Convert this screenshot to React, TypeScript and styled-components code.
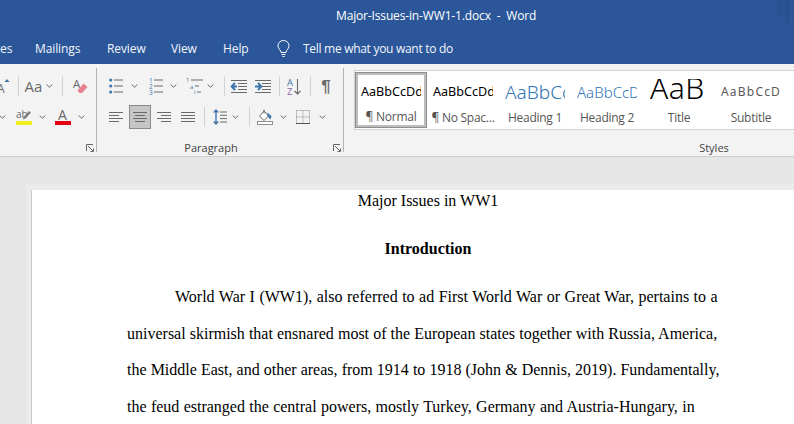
import React from 'react'
import styled, { createGlobalStyle } from 'styled-components'

const uiFont = `'Open Sans', 'Noto Sans', sans-serif`
const blue = '#2b579a'
const iconGrey = '#6a6a6a'
const iconBlue = '#3f76ad'

const GlobalStyle = createGlobalStyle`
  html, body {
    margin: 0;
    padding: 0;
    width: 794px;
    height: 424px;
    overflow: hidden;
    background: #e6e6e6;
  }
`

const Root = styled.div`
  width: 794px;
  height: 424px;
  overflow: hidden;
  display: flex;
  flex-direction: column;
  font-family: ${uiFont};
`

const TitleBar = styled.div`
  height: 32px;
  flex: none;
  position: relative;
  padding-left: 336px;
  background: ${blue};
  color: #fff;
  font-size: 12px;
  line-height: 32px;
  white-space: pre;
  letter-spacing: -0.15px;
`

// the window buttons are only a faint smudge in the screenshot
const FaintControl = styled.div<{ $right: number; $w: number; $h: number }>`
  position: absolute;
  top: 0;
  right: ${p => p.$right}px;
  width: ${p => p.$w}px;
  height: ${p => p.$h}px;
  background: rgba(0, 0, 0, 0.06);
`

const TabBar = styled.div`
  height: 32px;
  flex: none;
  background: ${blue};
  color: #f2f5fa;
  font-size: 12px;
  display: flex;
  align-items: center;
  letter-spacing: -0.1px;
`

const Tab = styled.div<{ $w: number }>`
  width: ${p => p.$w}px;
  flex: none;
  white-space: nowrap;
`

const TellMe = styled(Tab)`
  letter-spacing: -0.29px;
`

const Ribbon = styled.div`
  height: 92px;
  flex: none;
  display: flex;
  background: #f3f3f3;
  border-bottom: 1px solid #cfcfcf;
`

const Group = styled.div<{ $w: number; $pad: number }>`
  width: ${p => p.$w}px;
  flex: none;
  height: 84px;
  margin-top: 4px;
  padding: 2px 0 0 ${p => p.$pad}px;
  box-sizing: border-box;
  border-right: 1px solid #b4b4b4;
  position: relative;
  display: flex;
  flex-direction: column;
`

const ToolRow = styled.div<{ $h: number }>`
  height: ${p => p.$h}px;
  flex: none;
  display: flex;
  align-items: center;
`

const Tool = styled.div<{ $w: number }>`
  width: ${p => p.$w}px;
  flex: none;
  display: flex;
  justify-content: center;
  align-items: center;
`

const PressedTool = styled(Tool)`
  height: 22px;
  background: #c6c6c6;
  border: 1px solid #8b8b8b;
  box-sizing: content-box;
  width: 20px;
`

const CaseGlyph = styled.span`
  font-size: 15px;
  color: ${iconGrey};
  line-height: 1;
`

const PilcrowGlyph = styled.span`
  font-family: 'Liberation Sans', sans-serif;
  font-size: 17px;
  font-weight: 700;
  color: ${iconGrey};
  line-height: 1;
`

const Sep = styled.div<{ $w: number }>`
  width: ${p => p.$w}px;
  height: 20px;
  flex: none;
  position: relative;
  &::after {
    content: '';
    position: absolute;
    left: 50%;
    top: 0;
    bottom: 0;
    width: 1px;
    background: #d2d2d2;
  }
`

const GroupLabel = styled.div<{ $w: number }>`
  position: absolute;
  bottom: -4px;
  left: 0;
  width: ${p => p.$w}px;
  height: 16px;
  line-height: 16px;
  text-align: center;
  font-size: 11px;
  color: #444;
`

const LauncherWrap = styled.div`
  position: absolute;
  right: 2px;
  bottom: 0;
  display: flex;
`

const StylesGroup = styled.div`
  flex: 1;
  min-width: 0;
  height: 84px;
  margin-top: 4px;
  position: relative;
  padding-left: 10px;
`

const Gallery = styled.div`
  height: 60px;
  margin-top: 2px;
  box-sizing: border-box;
  background: #fff;
  border: 1px solid #d4d4d4;
  border-right: none;
  display: flex;
  overflow: hidden;
`

const StyleItem = styled.div<{ $active?: boolean }>`
  width: 72px;
  flex: none;
  box-sizing: border-box;
  margin: 1px 0;
  border: ${p => (p.$active ? '3px solid #bdbdbd' : 'none')};
  outline: ${p => (p.$active ? '1px solid #8e8e8e' : 'none')};
  outline-offset: -1px;
  padding-top: ${p => (p.$active ? 0 : 3)}px;
  display: flex;
  flex-direction: column;
  align-items: center;
  overflow: hidden;
`

const Preview = styled.div<{ $size: number; $color: string; $spacing?: number; $w: number }>`
  height: 35px;
  width: ${p => p.$w}px;
  overflow: hidden;
  font-size: ${p => p.$size}px;
  color: ${p => p.$color};
  letter-spacing: ${p => p.$spacing ?? 0}px;
  line-height: 34px;
  white-space: nowrap;
  font-family: 'Noto Sans', sans-serif;
  font-weight: ${p => (p.$size > 13 ? 300 : 400)};
`

const TitlePreview = styled(Preview)`
  height: 22px;
  margin: 4px 0 9px;
  line-height: 18px;
  letter-spacing: 0.5px;
`

const StyleName = styled.div`
  font-size: 12px;
  line-height: 16px;
  color: #555;
  white-space: nowrap;
  letter-spacing: -0.25px;
`

const Canvas = styled.div`
  flex: 1;
  min-height: 0;
  background: #e6e6e6;
  padding: 33px 0 0 32px;
`

const Page = styled.div`
  width: 792px;
  min-height: 300px;
  background: #fff;
  box-shadow: -1px 0 0 #c9c9c9, 0 0 0 6px #ebebeb;
  box-sizing: border-box;
  padding: 0 95px;
  font-family: 'Liberation Serif', serif;
  font-size: 16px;
  color: #000;
`

const DocTitle = styled.div`
  height: 22px;
  line-height: 22px;
  text-align: center;
  white-space: nowrap;
`

const Heading = styled.div`
  margin-top: 26px;
  height: 22px;
  line-height: 22px;
  text-align: center;
  font-weight: 700;
`

const Body = styled.div`
  margin-top: 19px;
`

const BodyLine = styled.div<{ $indent?: boolean; $stretch?: number }>`
  height: 36.6px;
  line-height: 36.6px;
  white-space: nowrap;
  padding-left: ${p => (p.$indent ? 48 : 0)}px;
  word-spacing: ${p => p.$stretch ?? 0}px;
`

const Icon = styled.svg`
  display: block;
  overflow: visible;
`

const IconText = styled.text<{ $size: number; $color: string }>`
  font-family: 'Open Sans', sans-serif;
  font-size: ${p => p.$size}px;
  fill: ${p => p.$color};
`

function Chevron() {
  return (
    <Icon width='7' height='4' viewBox='0 0 7 4'>
      <path d='M.7.6 3.5 3.2 6.3.6' fill='none' stroke='#666' strokeWidth='1' />
    </Icon>
  )
}

function Launcher() {
  return (
    <Icon width='8' height='8' viewBox='0 0 8 8'>
      <path d='M.5 7V.5H7M2 2l5 5M4.500 7.500h3v-3' fill='none' stroke='#666' strokeWidth='1' />
    </Icon>
  )
}

function Lines({ kind }: { kind: 'left' | 'center' | 'right' | 'justify' }) {
  const short =
    kind === 'left' ? [0, 10] : kind === 'center' ? [2, 12] : kind === 'right' ? [4, 14] : [0, 14]
  const rows = [[0, 14], short, [0, 14], short]
  return (
    <Icon width='14' height='12' viewBox='0 0 14 12'>
      {rows.map((r, i) => (
        <path key={i} d={`M${r[0]} ${1.5 + i * 3}H${r[1]}`} stroke={iconGrey} strokeWidth='1' />
      ))}
    </Icon>
  )
}

function Bullets() {
  return (
    <Icon width='14' height='16' viewBox='0 0 14 16'>
      {[2, 8, 14].map(y => (
        <g key={y}>
          <circle cx='1.7' cy={y} r='1.6' fill={iconBlue} />
          <path d={`M5 ${y}h9`} stroke={iconGrey} strokeWidth='1' />
        </g>
      ))}
    </Icon>
  )
}

function Numbering() {
  return (
    <Icon width='15' height='17' viewBox='0 0 15 17'>
      {['1', '2', '3'].map((n, i) => (
        <g key={n}>
          <IconText x='1' y={4.5 + i * 6} $size={6.5} $color={iconBlue}>{n}</IconText>
          <path d={`M6 ${2 + i * 6}h9`} stroke={iconGrey} strokeWidth='1' />
        </g>
      ))}
    </Icon>
  )
}

function Multilevel() {
  return (
    <Icon width='17' height='16' viewBox='0 0 17 16'>
      <IconText x='0' y='4' $size={6} $color={iconGrey}>1</IconText>
      <IconText x='4' y='10.500' $size={6} $color={iconBlue}>a</IconText>
      <IconText x='8' y='16' $size={6} $color={iconBlue}>i</IconText>
      <path d='M5 2h12M9 8h4M11 14h4' fill='none' stroke={iconGrey} strokeWidth='1' />
    </Icon>
  )
}

function Indent({ out }: { out: boolean }) {
  return (
    <Icon width='16' height='13' viewBox='0 0 16 13'>
      <path d='M0 .5h16M7 3.500h9M7 6.500h9M7 9.500h9M0 12.500h16' stroke={iconGrey} strokeWidth='1' />
      <path
        d={out ? 'M6 6.500H1M4 3 .7 6.500 4 10' : 'M0 6.500h5M3 3l3.300 3.500L3 10'}
        fill='none'
        stroke={iconBlue}
        strokeWidth='2'
      />
    </Icon>
  )
}

function Sort() {
  return (
    <Icon width='14' height='17' viewBox='0 0 14 17'>
      <IconText x='0' y='7.500' $size={9.5} $color={iconBlue}>A</IconText>
      <IconText x='0' y='16.500' $size={9.5} $color='#8a63a8'>Z</IconText>
      <path d='M10.500 1v15M7.500 13l3 3 3-3' fill='none' stroke={iconGrey} strokeWidth='1.100' />
    </Icon>
  )
}

function LineSpacing() {
  return (
    <Icon width='14' height='16' viewBox='0 0 14 16'>
      <path d='M3 1v14M.8 3.500 3 1l2.200 2.500M.8 12.500 3 15l2.200-2.500' fill='none' stroke={iconBlue} strokeWidth='1.400' />
      <path d='M7 3h7M7 6.300h7M7 9.600h7M7 13h7' stroke={iconGrey} strokeWidth='1' />
    </Icon>
  )
}

function Shading() {
  return (
    <Icon width='16' height='16' viewBox='0 0 16 16'>
      <path d='M2.500 7 7 2l4.500 5L7 11.500z' fill='#fff' stroke={iconGrey} strokeWidth='1' />
      <path d='M7 .5v4' stroke={iconGrey} strokeWidth='1' />
      <path d='M10 3.500 14.500 7 13.500 10.500 11 8z' fill={iconBlue} />
      <rect x='.5' y='12.500' width='15' height='3' fill='#fff' stroke='#8f8f8f' strokeWidth='1' />
    </Icon>
  )
}

function Borders() {
  return (
    <Icon width='14' height='14' viewBox='0 0 14 14'>
      <path d='M.5.500h13M.5 7h13M.5.500v13M7 .500v13M13.500.500v13' fill='none' stroke='#888' strokeWidth='1' strokeDasharray='1 1' />
      <path d='M0 13.500h14' stroke='#555' strokeWidth='1' />
    </Icon>
  )
}

function Bulb() {
  return (
    <Icon width='13' height='17' viewBox='0 0 13 17'>
      <path
        d='M4 12.500C4 10 1 9 1 5.700a5.500 5.200 0 0 1 11 0C12 9 9 10 9 12.500zM4.500 14.500h4M5.500 16.500h2'
        fill='none'
        stroke='#fff'
        strokeWidth='1'
      />
    </Icon>
  )
}

function GrowFont() {
  return (
    <Icon width='10' height='16' viewBox='0 0 10 16'>
      <IconText x='-3' y='15' $size={12} $color={iconGrey}>A</IconText>
      <path d='M4.500 4 7 1l2.500 3z' fill={iconBlue} />
    </Icon>
  )
}

function ClearFormat() {
  return (
    <Icon width='15' height='15' viewBox='0 0 15 15'>
      <IconText x='0' y='9' $size={11.500} $color={iconGrey}>A</IconText>
      <path d='M10.500 4.500 14.500 8 9 14H6.500L4.500 11.500z' fill='#e8808f' />
    </Icon>
  )
}

function Highlight() {
  return (
    <Icon width='16' height='16' viewBox='0 0 16 16'>
      <IconText x='0' y='8.500' $size={10} $color={iconGrey}>ab</IconText>
      <path d='M7 10.500 8 7.500 13 2l2 1.500-5.500 6z' fill='#7d7d7d' />
      <rect y='12' width='16' height='4' fill='#f4ee1f' />
    </Icon>
  )
}

function FontColor() {
  return (
    <Icon width='16' height='16' viewBox='0 0 16 16'>
      <IconText x='3' y='11' $size={14} $color={iconGrey}>A</IconText>
      <rect y='12' width='16' height='4' fill='#e0000f' />
    </Icon>
  )
}

const firstRow: React.ReactNode = (
  <>
    <Tool $w={14}><Bullets /></Tool>
    <Tool $w={22}><Chevron /></Tool>
    <Tool $w={3} />
    <Tool $w={15}><Numbering /></Tool>
    <Tool $w={20}><Chevron /></Tool>
    <Tool $w={3} />
    <Tool $w={17}><Multilevel /></Tool>
    <Tool $w={14}><Chevron /></Tool>
    <Sep $w={14} />
    <Tool $w={16}><Indent out /></Tool>
    <Tool $w={8} />
    <Tool $w={16}><Indent out={false} /></Tool>
    <Sep $w={16} />
    <Tool $w={14}><Sort /></Tool>
    <Sep $w={18} />
    <Tool $w={14}><PilcrowGlyph>¶</PilcrowGlyph></Tool>
  </>
)

const secondRow: React.ReactNode = (
  <>
    <Tool $w={14}><Lines kind='left' /></Tool>
    <Tool $w={6} />
    <PressedTool $w={20}><Lines kind='center' /></PressedTool>
    <Tool $w={6} />
    <Tool $w={14}><Lines kind='right' /></Tool>
    <Tool $w={10} />
    <Tool $w={14}><Lines kind='justify' /></Tool>
    <Sep $w={17} />
    <Tool $w={15}><LineSpacing /></Tool>
    <Tool $w={17}><Chevron /></Tool>
    <Sep $w={10} />
    <Tool $w={3} />
    <Tool $w={16}><Shading /></Tool>
    <Tool $w={20}><Chevron /></Tool>
    <Tool $w={3} />
    <Tool $w={14}><Borders /></Tool>
    <Tool $w={24}><Chevron /></Tool>
  </>
)

const galleryItems = [
  { name: '¶ Normal', size: 12.6, color: '#000', sample: 'AaBbCcDd', active: true },
  { name: '¶ No Spac...', size: 12.6, color: '#000', sample: 'AaBbCcDd' },
  { name: 'Heading 1', size: 19, color: '#2e74b5', sample: 'AaBbCc' },
  { name: 'Heading 2', size: 15, color: '#2e74b5', sample: 'AaBbCcD' },
]

export default function App() {
  return (
    <Root>
      <GlobalStyle />
      <TitleBar>
        {'Major-Issues-in-WW1-1.docx  -  Word'}
        <FaintControl $right={11} $w={6} $h={16} />
        <FaintControl $right={4} $w={5} $h={23} />
      </TitleBar>
      <TabBar>
        <Tab $w={35}>es</Tab>
        <Tab $w={72}>Mailings</Tab>
        <Tab $w={64}>Review</Tab>
        <Tab $w={52}>View</Tab>
        <Tab $w={54}>Help</Tab>
        <Tab $w={26}><Bulb /></Tab>
        <TellMe $w={160}>Tell me what you want to do</TellMe>
      </TabBar>
      <Ribbon>
        <Group $w={97} $pad={0}>
          <ToolRow $h={32}>
            <Tool $w={10}><GrowFont /></Tool>
            <Sep $w={15} />
            <Tool $w={17}><CaseGlyph>Aa</CaseGlyph></Tool>
            <Tool $w={14}><Chevron /></Tool>
            <Sep $w={12} />
            <Tool $w={5} />
            <Tool $w={15}><ClearFormat /></Tool>
          </ToolRow>
          <ToolRow $h={30}>
            <Tool $w={5}><Chevron /></Tool>
            <Tool $w={11} />
            <Tool $w={16}><Highlight /></Tool>
            <Tool $w={20}><Chevron /></Tool>
            <Tool $w={3} />
            <Tool $w={16}><FontColor /></Tool>
            <Tool $w={20}><Chevron /></Tool>
          </ToolRow>
          <LauncherWrap><Launcher /></LauncherWrap>
        </Group>
        <Group $w={247} $pad={12}>
          <ToolRow $h={32}>{firstRow}</ToolRow>
          <ToolRow $h={30}>{secondRow}</ToolRow>
          <GroupLabel $w={228}>Paragraph</GroupLabel>
          <LauncherWrap><Launcher /></LauncherWrap>
        </Group>
        <StylesGroup>
          <Gallery>
            {galleryItems.map(s => (
              <StyleItem key={s.name} $active={s.active}>
                <Preview $size={s.size} $color={s.color} $w={60}>{s.sample}</Preview>
                <StyleName>{s.name}</StyleName>
              </StyleItem>
            ))}
            <StyleItem>
              <TitlePreview $size={30} $color='#000' $w={58}>AaB</TitlePreview>
              <StyleName>Title</StyleName>
            </StyleItem>
            <StyleItem>
              <Preview $size={12} $color='#595959' $spacing={1.2} $w={60}>AaBbCcD</Preview>
              <StyleName>Subtitle</StyleName>
            </StyleItem>
          </Gallery>
          <GroupLabel $w={740}>Styles</GroupLabel>
        </StylesGroup>
      </Ribbon>
      <Canvas>
        <Page>
          <DocTitle>Major Issues in WW1</DocTitle>
          <Heading>Introduction</Heading>
          <Body>
            <BodyLine $indent $stretch={0.5}>World War I (WW1), also referred to ad First World War or Great War, pertains to a</BodyLine>
            <BodyLine $stretch={0.08}>universal skirmish that ensnared most of the European states together with Russia, America,</BodyLine>
            <BodyLine $stretch={0.08}>the Middle East, and other areas, from 1914 to 1918 (John &amp; Dennis, 2019). Fundamentally,</BodyLine>
            <BodyLine $stretch={0.33}>the feud estranged the central powers, mostly Turkey, Germany and Austria-Hungary, in</BodyLine>
          </Body>
        </Page>
      </Canvas>
    </Root>
  )
}
